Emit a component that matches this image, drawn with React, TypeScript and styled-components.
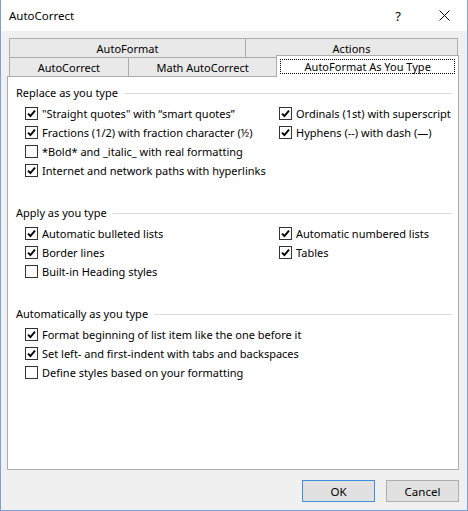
import React from "react";
import styled, { createGlobalStyle } from "styled-components";

const GlobalStyle = createGlobalStyle`
  html, body { margin: 0; padding: 0; background: #f0f0f0; }
  body { font-family: "Noto Sans", "Segoe UI", sans-serif; font-size: 11px; color: #000; }
`;

const Window = styled.div`
  width: 468px;
  height: 511px;
  box-sizing: border-box;
  border: 1px solid #7aa0d6;
  border-top: none;
  display: flex;
  flex-direction: column;
  background: #f0f0f0;
`;

const TitleBar = styled.div`
  height: 31px;
  background: #fff;
  display: flex;
  align-items: center;
  padding-left: 8px;
  flex-shrink: 0;
`;

const Title = styled.div`
  flex: 1;
  font-size: 11.5px;
  margin-top: -1px;
`;

const TitleButton = styled.div`
  width: 46px;
  height: 31px;
  display: flex;
  align-items: center;
  justify-content: center;
  font-size: 13px;
`;

const Body = styled.div`
  flex: 1;
  display: flex;
  flex-direction: column;
  padding: 7px 8px 8px 6px;
  min-height: 0;
`;

const TabRow = styled.div`
  display: flex;
  margin-left: 2px;
  height: 19px;
  position: relative;
`;

const Tab = styled.div<{ $w: number; $active?: boolean }>`
  width: ${(p) => p.$w}px;
  box-sizing: border-box;
  border: 1px solid #acacac;
  border-bottom: none;
  background: ${(p) => (p.$active ? "#fff" : "#e9e9e9")};
  display: flex;
  align-items: center;
  justify-content: center;
  & + & { margin-left: -1px; }
  ${(p) =>
    p.$active
      ? `
    height: 22px;
    margin-top: -2px;
    position: relative;
    z-index: 2;
    padding: 3px 3px 3px 3px;
  `
      : `height: 19px;`}
`;

const TabLabel = styled.span`
  line-height: 16px;
  margin-top: 1px;
`;

const FocusLabel = styled.span`
  flex: 1;
  align-self: stretch;
  border: 1px dotted #000;
  display: flex;
  align-items: center;
  justify-content: center;
  line-height: 14px;
`;

const Panel = styled.div`
  flex: 1;
  box-sizing: border-box;
  border: 1px solid #acacac;
  background: #fff;
  padding: 6px 6px 0 8px;
  position: relative;
  z-index: 1;
`;

const Section = styled.section`
  & + & { margin-top: 23px; }
`;

const Heading = styled.div`
  display: flex;
  align-items: center;
  height: 19px;
  margin-bottom: 2px;
  &::after {
    content: "";
    flex: 1;
    height: 1px;
    background: #dcdcdc;
    margin-left: 6px;
    margin-top: 1px;
  }
`;

const Options = styled.div`
  display: grid;
  grid-template-columns: 254px 1fr;
  grid-auto-rows: 19px;
  margin-left: 9px;
`;

const Option = styled.label<{ $col?: number }>`
  display: flex;
  align-items: center;
  grid-column: ${(p) => p.$col ?? 1};
  white-space: nowrap;
`;

const Box = styled.span`
  width: 13px;
  height: 13px;
  box-sizing: border-box;
  border: 1px solid #333;
  background: #fff;
  display: flex;
  align-items: center;
  justify-content: center;
  margin-right: 4px;
  flex-shrink: 0;
`;

const Footer = styled.div`
  display: flex;
  justify-content: flex-end;
  gap: 11px;
  margin-top: 10px;
`;

const Button = styled.button<{ $default?: boolean }>`
  width: 73px;
  height: 22px;
  box-sizing: border-box;
  border: 1px solid ${(p) => (p.$default ? "#3c8fe0" : "#adadad")};
  background: #e1e1e1;
  font-family: inherit;
  font-size: 11.5px;
  color: #000;
  padding: 0;
  margin: 0;
`;

const Check = () => (
  <svg width="9" height="9" viewBox="0 0 9 9">
    <path d="M1 4.6 L3.4 7 L8 1.6" fill="none" stroke="#000" strokeWidth="1.9" />
  </svg>
);

type Item = { text: string; checked: boolean; col?: number; row?: number };

const CheckOption = ({ item }: { item: Item }) => (
  <Option $col={item.col} style={item.row ? { gridRow: item.row } : undefined}>
    <Box>{item.checked && <Check />}</Box>
    {item.text}
  </Option>
);

const sections: { title: string; items: Item[] }[] = [
  {
    title: "Replace as you type",
    items: [
      { text: "\"Straight quotes\" with \u201Csmart quotes\u201D", checked: true, row: 1 },
      { text: "Ordinals (1st) with superscript", checked: true, col: 2, row: 1 },
      { text: "Fractions (1/2) with fraction character (\u00BD)", checked: true, row: 2 },
      { text: "Hyphens (--) with dash (\u2014)", checked: true, col: 2, row: 2 },
      { text: "*Bold* and _italic_ with real formatting", checked: false, row: 3 },
      { text: "Internet and network paths with hyperlinks", checked: true, row: 4 },
    ],
  },
  {
    title: "Apply as you type",
    items: [
      { text: "Automatic bulleted lists", checked: true, row: 1 },
      { text: "Automatic numbered lists", checked: true, col: 2, row: 1 },
      { text: "Border lines", checked: true, row: 2 },
      { text: "Tables", checked: true, col: 2, row: 2 },
      { text: "Built-in Heading styles", checked: false, row: 3 },
    ],
  },
  {
    title: "Automatically as you type",
    items: [
      { text: "Format beginning of list item like the one before it", checked: true, row: 1 },
      { text: "Set left- and first-indent with tabs and backspaces", checked: true, row: 2 },
      { text: "Define styles based on your formatting", checked: false, row: 3 },
    ],
  },
];

export default function App() {
  return (
    <>
      <GlobalStyle />
      <Window>
        <TitleBar>
          <Title>AutoCorrect</Title>
          <TitleButton>?</TitleButton>
          <TitleButton>
            <svg width="11" height="11" viewBox="0 0 11 11">
              <path d="M0.5 0.5 L10.5 10.5 M10.5 0.5 L0.5 10.5" stroke="#000" strokeWidth="1" />
            </svg>
          </TitleButton>
        </TitleBar>
        <Body>
          <TabRow>
            <Tab $w={237}><TabLabel>AutoFormat</TabLabel></Tab>
            <Tab $w={213}><TabLabel>Actions</TabLabel></Tab>
          </TabRow>
          <TabRow>
            <Tab $w={120}><TabLabel>AutoCorrect</TabLabel></Tab>
            <Tab $w={150}><TabLabel>Math AutoCorrect</TabLabel></Tab>
            <Tab $w={183} $active>
              <FocusLabel>AutoFormat As You Type</FocusLabel>
            </Tab>
          </TabRow>
          <Panel>
            {sections.map((s) => (
              <Section key={s.title}>
                <Heading>{s.title}</Heading>
                <Options>
                  {s.items.map((it) => (
                    <CheckOption key={it.text} item={it} />
                  ))}
                </Options>
              </Section>
            ))}
          </Panel>
          <Footer>
            <Button $default>OK</Button>
            <Button>Cancel</Button>
          </Footer>
        </Body>
      </Window>
    </>
  );
}
